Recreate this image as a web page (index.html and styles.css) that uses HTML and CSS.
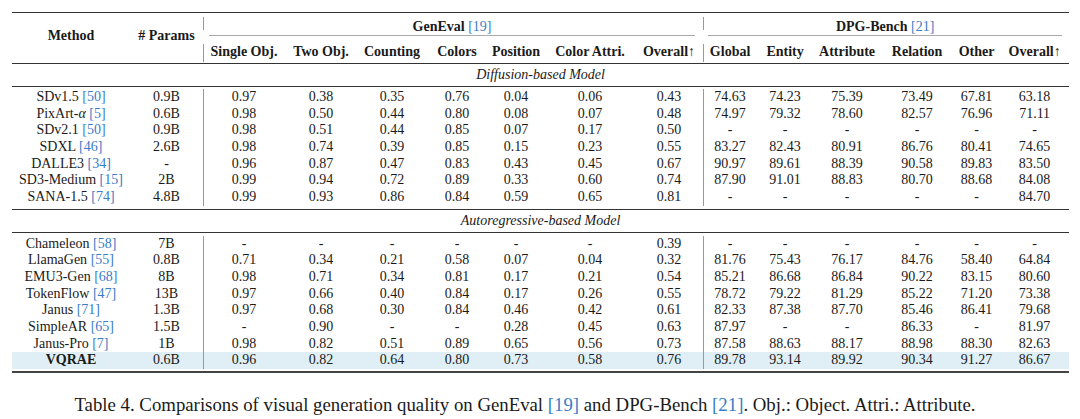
FILE: index.html
```html
<!DOCTYPE html>
<html>
<head>
<meta charset="utf-8">
<link rel="stylesheet" href="styles.css">
</head>
<body>
<div class="page">
<table class="results">
  <colgroup>
    <col style="width:118px"><col style="width:73px">
    <col style="width:82px"><col style="width:72px"><col style="width:70px"><col style="width:60px"><col style="width:58px"><col style="width:90px"><col style="width:68px">
    <col style="width:54px"><col style="width:56px"><col style="width:68px"><col style="width:72px"><col style="width:47px"><col style="width:69px">
  </colgroup>
  <thead>
    <tr class="h1">
      <th rowspan="2" class="multi">Method</th>
      <th rowspan="2" class="multi"># Params</th>
      <th colspan="7" class="group vl1"><div class="cmid gen">GenEval <span class="ref">[19]</span></div></th>
      <th colspan="6" class="group vl1"><div class="cmid dpg">DPG-Bench <span class="ref">[21]</span></div></th>
    </tr>
    <tr class="h2">
      <th class="vl2">Single Obj.</th><th>Two Obj.</th><th>Counting</th><th>Colors</th><th>Position</th><th>Color Attri.</th><th>Overall↑</th>
      <th class="vl2">Global</th><th>Entity</th><th>Attribute</th><th>Relation</th><th>Other</th><th>Overall↑</th>
    </tr>
  </thead>
  <tbody>
    <tr class="section"><td colspan="15">Diffusion-based Model</td></tr>
    <tr class="gap"><td colspan="15"></td></tr>
    <tr class="row"><td>SDv1.5 <span class="ref">[50]</span></td><td>0.9B</td><td class="vl">0.97</td><td>0.38</td><td>0.35</td><td>0.76</td><td>0.04</td><td>0.06</td><td>0.43</td><td class="vl">74.63</td><td>74.23</td><td>75.39</td><td>73.49</td><td>67.81</td><td>63.18</td></tr>
    <tr class="row"><td>PixArt-<i>α</i> <span class="ref">[5]</span></td><td>0.6B</td><td class="vl">0.98</td><td>0.50</td><td>0.44</td><td>0.80</td><td>0.08</td><td>0.07</td><td>0.48</td><td class="vl">74.97</td><td>79.32</td><td>78.60</td><td>82.57</td><td>76.96</td><td>71.11</td></tr>
    <tr class="row"><td>SDv2.1 <span class="ref">[50]</span></td><td>0.9B</td><td class="vl">0.98</td><td>0.51</td><td>0.44</td><td>0.85</td><td>0.07</td><td>0.17</td><td>0.50</td><td class="vl">-</td><td>-</td><td>-</td><td>-</td><td>-</td><td>-</td></tr>
    <tr class="row"><td>SDXL <span class="ref">[46]</span></td><td>2.6B</td><td class="vl">0.98</td><td>0.74</td><td>0.39</td><td>0.85</td><td>0.15</td><td>0.23</td><td>0.55</td><td class="vl">83.27</td><td>82.43</td><td>80.91</td><td>86.76</td><td>80.41</td><td>74.65</td></tr>
    <tr class="row"><td>DALLE3 <span class="ref">[34]</span></td><td>-</td><td class="vl">0.96</td><td>0.87</td><td>0.47</td><td>0.83</td><td>0.43</td><td>0.45</td><td>0.67</td><td class="vl">90.97</td><td>89.61</td><td>88.39</td><td>90.58</td><td>89.83</td><td>83.50</td></tr>
    <tr class="row"><td>SD3-Medium <span class="ref">[15]</span></td><td>2B</td><td class="vl">0.99</td><td>0.94</td><td>0.72</td><td>0.89</td><td>0.33</td><td>0.60</td><td>0.74</td><td class="vl">87.90</td><td>91.01</td><td>88.83</td><td>80.70</td><td>88.68</td><td>84.08</td></tr>
    <tr class="row"><td>SANA-1.5 <span class="ref">[74]</span></td><td>4.8B</td><td class="vl">0.99</td><td>0.93</td><td>0.86</td><td>0.84</td><td>0.59</td><td>0.65</td><td>0.81</td><td class="vl">-</td><td>-</td><td>-</td><td>-</td><td>-</td><td>84.70</td></tr>
    <tr class="gap mid"><td colspan="15"></td></tr>
    <tr class="section"><td colspan="15">Autoregressive-based Model</td></tr>
    <tr class="gap mid"><td colspan="15"></td></tr>
    <tr class="row"><td>Chameleon <span class="ref">[58]</span></td><td>7B</td><td class="vl">-</td><td>-</td><td>-</td><td>-</td><td>-</td><td>-</td><td>0.39</td><td class="vl">-</td><td>-</td><td>-</td><td>-</td><td>-</td><td>-</td></tr>
    <tr class="row"><td>LlamaGen <span class="ref">[55]</span></td><td>0.8B</td><td class="vl">0.71</td><td>0.34</td><td>0.21</td><td>0.58</td><td>0.07</td><td>0.04</td><td>0.32</td><td class="vl">81.76</td><td>75.43</td><td>76.17</td><td>84.76</td><td>58.40</td><td>64.84</td></tr>
    <tr class="row"><td>EMU3-Gen <span class="ref">[68]</span></td><td>8B</td><td class="vl">0.98</td><td>0.71</td><td>0.34</td><td>0.81</td><td>0.17</td><td>0.21</td><td>0.54</td><td class="vl">85.21</td><td>86.68</td><td>86.84</td><td>90.22</td><td>83.15</td><td>80.60</td></tr>
    <tr class="row"><td>TokenFlow <span class="ref">[47]</span></td><td>13B</td><td class="vl">0.97</td><td>0.66</td><td>0.40</td><td>0.84</td><td>0.17</td><td>0.26</td><td>0.55</td><td class="vl">78.72</td><td>79.22</td><td>81.29</td><td>85.22</td><td>71.20</td><td>73.38</td></tr>
    <tr class="row"><td>Janus <span class="ref">[71]</span></td><td>1.3B</td><td class="vl">0.97</td><td>0.68</td><td>0.30</td><td>0.84</td><td>0.46</td><td>0.42</td><td>0.61</td><td class="vl">82.33</td><td>87.38</td><td>87.70</td><td>85.46</td><td>86.41</td><td>79.68</td></tr>
    <tr class="row"><td>SimpleAR <span class="ref">[65]</span></td><td>1.5B</td><td class="vl">-</td><td>0.90</td><td>-</td><td>-</td><td>0.28</td><td>0.45</td><td>0.63</td><td class="vl">87.97</td><td>-</td><td>-</td><td>86.33</td><td>-</td><td>81.97</td></tr>
    <tr class="row"><td>Janus-Pro <span class="ref">[7]</span></td><td>1B</td><td class="vl">0.98</td><td>0.82</td><td>0.51</td><td>0.89</td><td>0.65</td><td>0.56</td><td>0.73</td><td class="vl">87.58</td><td>88.63</td><td>88.17</td><td>88.98</td><td>88.30</td><td>82.63</td></tr>
    <tr class="row hl"><td><b>VQRAE</b></td><td>0.6B</td><td class="vl">0.96</td><td>0.82</td><td>0.64</td><td>0.80</td><td>0.73</td><td>0.58</td><td>0.76</td><td class="vl">89.78</td><td>93.14</td><td>89.92</td><td>90.34</td><td>91.27</td><td>86.67</td></tr>
    <tr class="gap last"><td colspan="15"></td></tr>
  </tbody>
</table>
<p class="caption">Table 4. Comparisons of visual generation quality on GenEval <span class="ref">[19]</span> and DPG-Bench <span class="ref">[21]</span>. Obj.: Object. Attri.: Attribute.</p>
</div>
</body>
</html>
```

FILE: styles.css
```css
html, body {
  margin: 0;
  padding: 0;
  background: #ffffff;
}

.page {
  width: 1080px;
  padding-top: 12px;
  font-family: "Liberation Serif", "Times New Roman", serif;
  color: #1a1a1a;
}

.results {
  margin-left: 12px;
  width: 1057px;
  table-layout: fixed;
  border-collapse: collapse;
  border-top: 1px solid #333;
  border-bottom: 2px solid #444;
  font-size: 14px;
}

.results th,
.results td {
  padding: 0;
  text-align: center;
  white-space: nowrap;
}

.results th {
  font-weight: bold;
}

.ref {
  color: #3a7cc6;
  font-weight: normal;
}

.h1 th {
  height: 22px;
  line-height: 16px;
}

.h1 th.multi {
  vertical-align: middle;
  padding-bottom: 5px;
}

.h1 th.group {
  vertical-align: top;
  padding-top: 6px;
}

.vl1 {
  background-image: linear-gradient(#999, #999);
  background-size: 1px 13px;
  background-position: left 4px;
  background-repeat: no-repeat;
}

.cmid {
  border-bottom: 1px solid #aaa;
  padding-bottom: 0;
}

.cmid.gen {
  margin: 0 8px 0 6px;
}

.cmid.dpg {
  margin: 0 7px 0 5px;
}

.h2 th {
  height: 22px;
  line-height: 16px;
  padding: 0;
  border-bottom: 1px solid #333;
}

.vl2 {
  background-image: linear-gradient(#999, #999);
  background-size: 1px 18px;
  background-position: left 3px;
  background-repeat: no-repeat;
}

.section td {
  height: 22px;
  line-height: 22px;
  font-style: italic;
  border-top: 1px solid #333;
  border-bottom: 1px solid #333;
}

.gap td {
  height: 2px;
  line-height: 2px;
  font-size: 0;
}

.gap.mid td {
  height: 3px;
  line-height: 3px;
}

.row td {
  height: 16.67px;
  line-height: 16.67px;
}

.row td.vl {
  background-image: linear-gradient(#999, #999);
  background-size: 1px 100%;
  background-position: left top;
  background-repeat: no-repeat;
}

.row.hl td {
  background-color: #dfeff5;
}

.row.hl td b {
  font-weight: bold;
}

.caption {
  margin: 22px 0 0 0;
  padding-right: 30px;
  text-align: center;
  font-size: 18.8px;
  line-height: 20px;
  color: #1a1a1a;
}
```
